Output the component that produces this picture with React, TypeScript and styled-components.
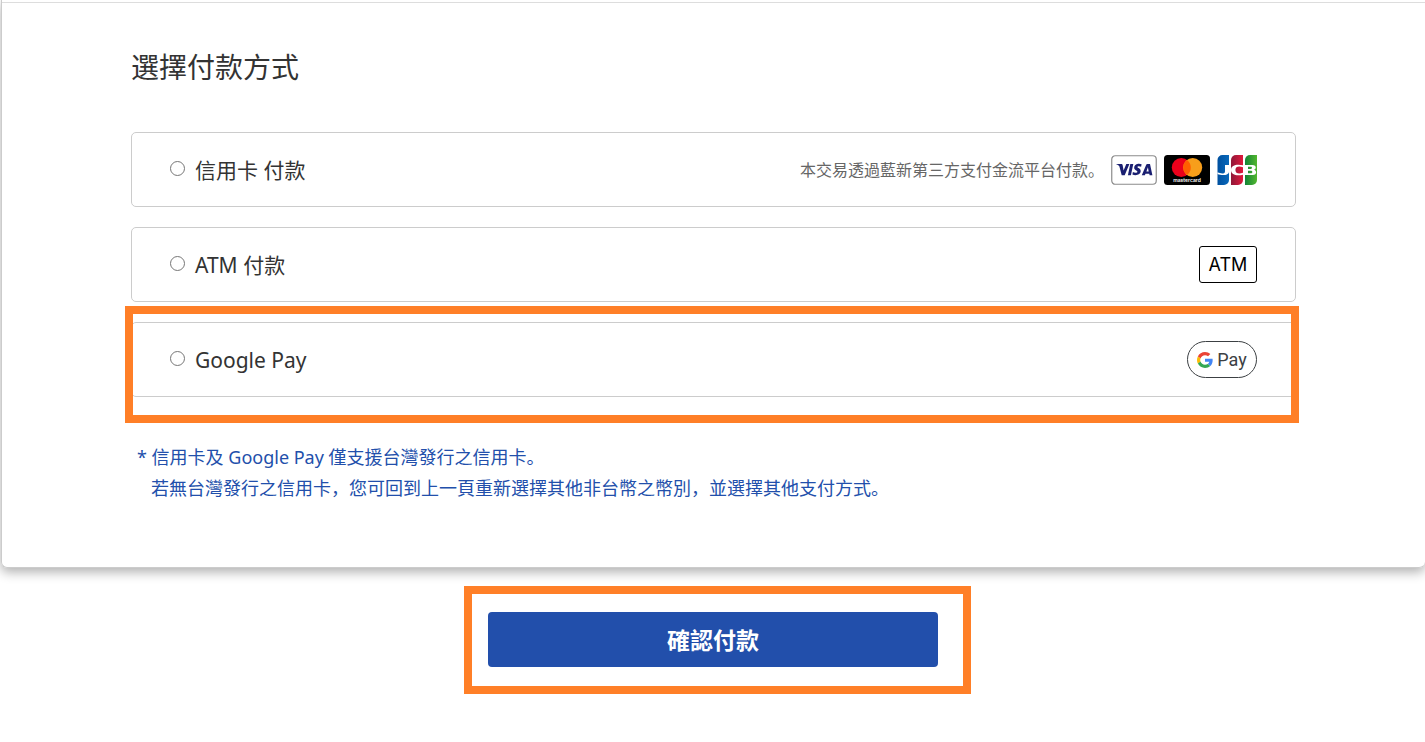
import React from 'react';
import styled, { createGlobalStyle } from 'styled-components';

const GlobalStyle = createGlobalStyle`
  *, *::before, *::after { box-sizing: border-box; }
  body {
    margin: 0;
    background: #fff;
    color: #333;
    font-family: "Noto Sans", "Noto Sans CJK SC", sans-serif;
  }
`;

const Page = styled.div`
  padding-left: 1px;
  overflow-x: hidden;
`;

const Panel = styled.main`
  border: 1px solid #ccc;
  border-top: 0;
  border-right: 0;
  border-radius: 0 0 6px 6px;
  box-shadow: 0 4px 12px rgba(0, 0, 0, 0.32);
  padding-top: 2px;
`;

const PanelBody = styled.form`
  border-top: 1px solid #ddd;
  padding: 44px 129px 63px;
`;

const Title = styled.h1`
  margin: 0 0 45px;
  font-size: 28px;
  font-weight: 400;
  line-height: 40px;
`;

const OptionList = styled.div`
  display: flex;
  flex-direction: column;
  gap: 20px;
`;

const Option = styled.label`
  position: relative;
  display: flex;
  align-items: center;
  height: 75px;
  padding: 0 38px;
  border: 1px solid #ccc;
  border-radius: 5px;
  cursor: pointer;
`;

const Radio = styled.input`
  appearance: none;
  width: 15px;
  height: 15px;
  margin: 0 10px 2px 0;
  border: 1px solid #767676;
  border-radius: 50%;
  background: #fff;
  &:checked { border: 4px solid #224fab; }
`;

const OptionName = styled.span`
  font-size: 21px;
  line-height: 30px;
`;

const Brands = styled.span`
  display: flex;
  align-items: center;
  gap: 7px;
  margin-left: auto;
`;

const BrandHint = styled.span`
  color: #666;
  font-size: 16px;
  line-height: 24px;
`;

const AtmBadge = styled.span`
  width: 58px;
  height: 37px;
  border: 1px solid #000;
  border-radius: 3px;
  color: #000;
  font: 18px/35px Inter, sans-serif;
  text-align: center;
`;

const PayBadge = styled.span`
  display: flex;
  align-items: center;
  justify-content: center;
  gap: 4px;
  width: 70px;
  height: 37px;
  border: 1px solid #3c4043;
  border-radius: 19px;
  color: #3c4043;
  font: 18px/35px Roboto, sans-serif;
`;

const Notes = styled.p`
  margin: 45px 0 0;
  padding-left: 20px;
  color: #224fab;
  font-size: 18px;
  line-height: 31px;
`;

const NoteLine = styled.span<{ $flush?: boolean }>`
  display: block;
  text-indent: ${(p) => (p.$flush ? '0' : '-14px')};
`;

const Actions = styled.div`
  display: flex;
  justify-content: center;
  padding: 44px 0 75px;
`;

const ButtonHolder = styled.div`
  position: relative;
  width: 450px;
  max-width: 90%;
`;

const ConfirmButton = styled.button`
  display: block;
  width: 100%;
  height: 55px;
  padding: 0 0 2px;
  border: 0;
  border-radius: 4px;
  background: #224fab;
  color: #fff;
  font-family: inherit;
  font-size: 23px;
  font-weight: 700;
  cursor: pointer;
`;

const Highlight = styled.span<{ $inset: string }>`
  position: absolute;
  inset: ${(p) => p.$inset};
  border: 8px solid #ff7f27;
  pointer-events: none;
`;

const VisaLogo = () => (
  <svg width="46" height="30" viewBox="0 0 46 30" role="img" aria-label="Visa">
    <rect x=".75" y=".75" width="44.5" height="28.5" rx="3.5" fill="#fff" stroke="#8c8c8c" strokeWidth="1.2" />
    <g fill="#1a1f71">
      <path d="M5.500 9h4.700c.8 0 1.200.3 1.400 1.100l1 5.500 2.700-6.600h3.100L13.700 20.300h-3L8.400 11.400c-.1-.5-.4-.8-.8-1C7 10.100 6.200 9.800 5.500 9.600z" />
      <path d="M19.300 9h3L19.900 20.300H16.900z" />
      <path d="M30.600 9.300l-.5 2.400c-1.200-.5-3.700-.8-3.700.4 0 1 3.300 1.200 3.300 4 0 4-5 4.800-8.300 3.500l.5-2.500c1.600.8 4.500 1 4.500-.4 0-1.300-3.200-1.300-3.200-4 0-3.700 4.600-4.600 7.400-3.400z" />
      <path fillRule="evenodd" d="M36.400 9h2.600L41.400 20.300h-2.800l-.3-1.600h-3.800l-.6 1.600h-3.100l4.300-10.400c.2-.6.600-.9 1.300-.9zM36.900 12.300l-1.500 4.100h2.300z" />
    </g>
  </svg>
);

const MastercardLogo = () => (
  <svg width="46" height="30" viewBox="0 0 46 30" role="img" aria-label="Mastercard">
    <rect width="46" height="30" rx="3.5" fill="#000" />
    <circle cx="17.3" cy="12.500" r="9.500" fill="#eb001b" />
    <circle cx="28.700" cy="12.500" r="9.500" fill="#f79e1b" />
    <path d="M23 4.900a9.500 9.500 0 0 1 0 15.200a9.500 9.500 0 0 1 0-15.200z" fill="#ff5f00" />
    <text x="23" y="27" fill="#fff" fontFamily="Inter, sans-serif" fontSize="5" fontWeight="600" textAnchor="middle">mastercard</text>
  </svg>
);

const JcbLogo = () => (
  <svg width="40" height="30" viewBox="0 0 40 30" role="img" aria-label="JCB">
    <defs>
      <linearGradient id="jcbBlue"><stop stopColor="#00509f" /><stop offset="1" stopColor="#0868ba" /></linearGradient>
      <linearGradient id="jcbRed"><stop stopColor="#8e1838" /><stop offset="1" stopColor="#e0193d" /></linearGradient>
      <linearGradient id="jcbGreen"><stop stopColor="#138437" /><stop offset="1" stopColor="#52b72f" /></linearGradient>
    </defs>
    <path d="M5.500 0H12v25a5 5 0 0 1-5 5H.5V5a5 5 0 0 1 5-5z" fill="url(#jcbBlue)" />
    <path d="M19 0h7v25a5 5 0 0 1-5 5h-7V5a5 5 0 0 1 5-5z" fill="url(#jcbRed)" />
    <path d="M33 0h7v25a5 5 0 0 1-5 5h-7V5a5 5 0 0 1 5-5z" fill="url(#jcbGreen)" />
    <g fill="#fff">
      <path d="M8 10h4v6.500c0 4.300-7.500 4.200-11.500 2.600v-1.800c3.500 1.500 7.500 1.800 7.500-.9z" />
      <path d="M26 10.300v2c-3.800-1.500-7.600-1.100-7.600 2.700s3.800 4.200 7.600 2.700v2c-6 1.300-12 .4-12-4.700s6-6 12-4.700z" />
      <path fillRule="evenodd" d="M28 10h7.500c4 0 4.200 4 1.200 4.700 3.500.5 3.300 5.300-.9 5.300H28zM31 11.700v2.300h2.800c1.600 0 1.600-2.300 0-2.300zM31 15.700v2.500h3c1.800 0 1.800-2.500 0-2.500z" />
    </g>
  </svg>
);

const GoogleMark = () => (
  <svg width="16" height="16" viewBox="0 0 48 48" aria-hidden="true">
    <path fill="#ea4335" d="M24 9.500c3.540 0 6.710 1.220 9.210 3.600l6.850-6.850C35.900 2.380 30.470 0 24 0 14.620 0 6.510 5.380 2.560 13.220l7.980 6.190C12.430 13.720 17.740 9.500 24 9.500z" />
    <path fill="#4285f4" d="M46.980 24.550c0-1.570-.15-3.090-.38-4.550H24v9.020h12.940c-.58 2.960-2.260 5.480-4.780 7.180l7.730 6c4.510-4.180 7.090-10.360 7.090-17.650z" />
    <path fill="#fbbc05" d="M10.530 28.590c-.48-1.450-.76-2.990-.76-4.590s.27-3.140.76-4.590l-7.980-6.190C.92 16.460 0 20.120 0 24s.92 7.540 2.560 10.780l7.970-6.190z" />
    <path fill="#34a853" d="M24 48c6.480 0 11.930-2.130 15.890-5.810l-7.730-6c-2.150 1.450-4.920 2.300-8.160 2.300-6.260 0-11.570-4.220-13.470-9.910l-7.980 6.190C6.510 42.620 14.620 48 24 48z" />
  </svg>
);

export default function App() {
  return (
    <>
      <GlobalStyle />
      <Page>
        <Panel>
          <PanelBody id="payment">
            <Title>選擇付款方式</Title>
            <OptionList role="radiogroup" aria-label="選擇付款方式">
              <Option>
                <Radio type="radio" name="method" value="card" />
                <OptionName>信用卡 付款</OptionName>
                <Brands>
                  <BrandHint>本交易透過藍新第三方支付金流平台付款。</BrandHint>
                  <VisaLogo />
                  <MastercardLogo />
                  <JcbLogo />
                </Brands>
              </Option>
              <Option>
                <Radio type="radio" name="method" value="atm" />
                <OptionName>ATM 付款</OptionName>
                <Brands>
                  <AtmBadge>ATM</AtmBadge>
                </Brands>
              </Option>
              <Option>
                <Radio type="radio" name="method" value="gpay" />
                <OptionName>Google Pay</OptionName>
                <Brands>
                  <PayBadge><GoogleMark />Pay</PayBadge>
                </Brands>
                <Highlight $inset="-17px -4px -27px -7px" />
              </Option>
            </OptionList>
            <Notes>
              <NoteLine>* 信用卡及 Google Pay 僅支援台灣發行之信用卡。</NoteLine>
              <NoteLine $flush>若無台灣發行之信用卡，您可回到上一頁重新選擇其他非台幣之幣別，並選擇其他支付方式。</NoteLine>
            </Notes>
          </PanelBody>
        </Panel>
        <Actions>
          <ButtonHolder>
            <ConfirmButton type="submit" form="payment">確認付款</ConfirmButton>
            <Highlight $inset="-26px -33px -27px -24px" />
          </ButtonHolder>
        </Actions>
      </Page>
    </>
  );
}
